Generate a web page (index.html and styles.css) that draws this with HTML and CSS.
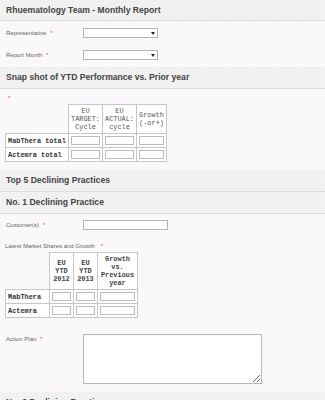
FILE: index.html
```html
<!DOCTYPE html>
<html lang="en">
<head>
    <meta charset="UTF-8">
    <meta name="viewport" content="width=device-width, initial-scale=1.0">
    <title>Rhuematology Team - Monthly Report</title>
    <link rel="stylesheet" href="styles.css">
</head>
<body>
    <div class="section-title">Rhuematology Team - Monthly Report</div>
    <div class="section top">
        <div class="field">
            <label>Representative<span class="req">*</span></label>
            <div class="select"><select></select></div>
        </div>
        <div class="field">
            <label>Report Month<span class="req">*</span></label>
            <div class="select"><select></select></div>
        </div>
    </div>

    <div class="section-title">Snap shot of YTD Performance vs. Prior year</div>
    <div class="section snapshot">
        <div class="req-line"><span class="req">*</span></div>
        <table class="grid ytd">
            <colgroup>
                <col style="width: 63px">
                <col style="width: 34px">
                <col style="width: 34px">
                <col style="width: 30px">
            </colgroup>
            <tr>
                <td class="corner"></td>
                <th>EU<br>TARGET:<br>Cycle</th>
                <th>EU<br>ACTUAL:<br>cycle</th>
                <th>Growth<br>(-or+)</th>
            </tr>
            <tr>
                <td class="name">MabThera total</td>
                <td><input type="text"></td>
                <td><input type="text"></td>
                <td><input type="text"></td>
            </tr>
            <tr>
                <td class="name">Actemra total</td>
                <td><input type="text"></td>
                <td><input type="text"></td>
                <td><input type="text"></td>
            </tr>
        </table>
    </div>

    <div class="section-title">Top 5 Declining Practices</div>
    <div class="section-title">No. 1 Declining Practice</div>
    <div class="section practice">
        <div class="field">
            <label>Customer(s)<span class="req">*</span></label>
            <input type="text" class="text-input">
        </div>
        <div class="sub-label">Latest Market Shares and Growth<span class="req">*</span></div>
        <table class="grid shares">
            <colgroup>
                <col style="width: 44px">
                <col style="width: 24px">
                <col style="width: 24px">
                <col style="width: 40px">
            </colgroup>
            <tr>
                <td class="corner"></td>
                <th>EU<br>YTD<br>2012</th>
                <th>EU<br>YTD<br>2013</th>
                <th>Growth<br>vs.<br>Previous<br>year</th>
            </tr>
            <tr>
                <td class="name">MabThera</td>
                <td><input type="text"></td>
                <td><input type="text"></td>
                <td><input type="text"></td>
            </tr>
            <tr>
                <td class="name">Actemra</td>
                <td><input type="text"></td>
                <td><input type="text"></td>
                <td><input type="text"></td>
            </tr>
        </table>
        <div class="field plan">
            <label>Action Plan<span class="req">*</span></label>
            <textarea></textarea>
        </div>
    </div>

    <div class="section-title">No. 2 Declining Practice</div>
    <div class="section">
        <div class="field">
            <label>Customer(s)<span class="req">*</span></label>
            <input type="text" class="text-input">
        </div>
    </div>
</body>
</html>
```

FILE: styles.css
```css
body {
    margin: 0;
    background-color: #fbf8fb;
    font-family: "Liberation Sans", Arial, sans-serif;
    color: #666;
}
.section-title {
    height: 22px;
    box-sizing: border-box;
    padding: 0 6px;
    line-height: 21px;
    font-size: 8.6px;
    font-weight: bold;
    color: #444;
    background-color: #f2f2f2;
    background-image: radial-gradient(#e9e9e9 0.6px, transparent 0.7px);
    background-size: 3px 3px;
    border-bottom: 1px solid #dcdcdc;
}
.section-title:first-child {
    height: 21px;
    line-height: 20px;
}
.section {
    padding: 7px 0 7px;
}
.field {
    display: flex;
    align-items: center;
    padding-left: 6px;
    height: 10px;
}
.field + .field {
    margin-top: 12px;
}
.field label {
    width: 77px;
    flex-shrink: 0;
    font-size: 6px;
    color: #666;
}
.req {
    color: #e84848;
    margin-left: 4px;
}
.select {
    position: relative;
    width: 75px;
    height: 10px;
}
.select select {
    appearance: none;
    display: block;
    width: 100%;
    height: 100%;
    margin: 0;
    padding: 0;
    border: 1px solid #b4b4b4;
    border-radius: 0;
    background: #fff;
}
.select::after {
    content: "";
    position: absolute;
    right: 3px;
    top: 4px;
    border-left: 2px solid transparent;
    border-right: 2px solid transparent;
    border-top: 3px solid #222;
}
.text-input {
    width: 85px;
    height: 10px;
    box-sizing: border-box;
    margin: 0;
    padding: 0;
    border: 1px solid #b4b4b4;
    background: #fff;
}
.snapshot {
    padding: 5px 0 8px;
}
.req-line {
    padding-left: 8px;
    height: 8px;
    line-height: 8px;
    font-size: 6px;
}
.req-line .req {
    margin-left: 0;
}
.grid {
    margin: 2px 0 0 5px;
    border-collapse: collapse;
    table-layout: fixed;
    font-family: "Liberation Mono", "Courier New", monospace;
    font-size: 6.9px;
    line-height: 8px;
    color: #333;
}
.grid th,
.grid td {
    border: 1px solid #c6c6c6;
    padding: 2px;
    background: #fff;
}
.grid th {
    font-weight: normal;
    text-align: center;
    color: #555;
}
.grid td.corner {
    border: none;
    background: transparent;
}
.grid td.name {
    font-weight: bold;
    white-space: nowrap;
    padding: 2px 2px;
}
.grid input {
    display: block;
    width: 100%;
    height: 9px;
    box-sizing: border-box;
    margin: 0;
    padding: 0;
    border: 1px solid #bcbcbc;
    background: #fff;
}
.shares th {
    font-weight: bold;
    color: #444;
    padding: 2px 1px;
}
.practice {
    padding: 6px 0 8px;
}
.sub-label {
    margin-top: 12px;
    padding-left: 5px;
    height: 8px;
    line-height: 8px;
    font-size: 6px;
    color: #666;
}
.sub-label .req {
    margin-left: 6px;
}
.field.plan {
    margin-top: 16px;
    height: 50px;
    align-items: flex-start;
}
.field.plan label {
    padding-top: 2px;
}
textarea {
    width: 179px;
    height: 50px;
    box-sizing: border-box;
    margin: 0;
    padding: 2px;
    border: 1px solid #b8b8b8;
    background: #fff;
    font-size: 7px;
}
```
